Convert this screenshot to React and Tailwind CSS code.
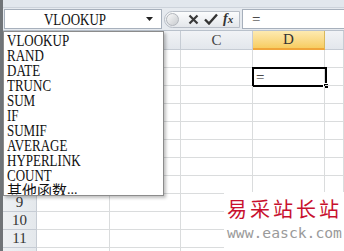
import React from 'react';

const SERIF = { fontFamily: '"Liberation Serif", "Noto Sans CJK SC", serif' };

const items = ['VLOOKUP', 'RAND', 'DATE', 'TRUNC', 'SUM', 'IF', 'SUMIF', 'AVERAGE', 'HYPERLINK', 'COUNT'];
const cols = ['', 'A', 'B', 'C', 'D', 'E'];
const rows = [1, 2, 3, 4, 5, 6, 7, 8, 9, 10, 11, 12];

const HeaderCell = ({ label, active }) => (
  <div
    className={
      active
        ? 'h-[19px] flex items-center justify-center border-r border-b-2 border-r-[#d9b95c] border-b-[#f0a53a] bg-gradient-to-b from-[#fdeab0] to-[#f7cd60] text-[15px] text-[#333]'
        : 'h-[19px] flex items-center justify-center border-r border-b border-[#c6ccd4] bg-gradient-to-b from-[#f1f3f6] to-[#e3e7ec] text-[15px] text-[#444]'
    }
    style={SERIF}
  >
    {label === 'E' ? '' : label}
  </div>
);

const App = () => {
  return (
    <div className="relative w-[344px] h-[251px] overflow-hidden bg-white flex items-start" style={{ fontFamily: '"Liberation Sans", sans-serif' }}>
      <div className="w-[3px] h-[251px] shrink-0 bg-[#707478]" />
      <div className="flex-1 min-w-0">
        <div className="h-[8px] bg-[#e2e7ed] border-b border-[#cdd3db]" />

        {/* formula bar */}
        <div className="h-[23px] flex items-center bg-[#e6eaef] border-b border-[#b9c1cb]">
          <div className="ml-[1px] w-[158px] h-[20px] bg-white border border-[#a7b0bc] flex items-center">
            <span className="flex-1 text-center pl-[4px]">
              <span className="inline-block scale-y-[1.35] text-[13px] leading-[14px] text-[#111]" style={SERIF}>VLOOKUP</span>
            </span>
            <svg width="20" height="20" viewBox="0 0 20 20">
              <path d="M5 8h7l-3.5 4z" fill="#222" />
            </svg>
          </div>
          <div className="ml-[2px] w-[76px] h-[17px] rounded-l-full border border-[#b8bec7] bg-gradient-to-b from-[#fbfcfd] to-[#e4e7eb] flex items-center">
            <div className="w-[13px] h-[13px] ml-[1px] rounded-full border border-[#b2b6bc] bg-gradient-to-br from-[#fafafa] to-[#c8cbcf]" />
            <svg className="ml-[9px]" width="11" height="11" viewBox="0 0 11 11">
              <path d="M1.5 1.5l8 8M9.5 1.5l-8 8" stroke="#3a3a3a" strokeWidth="2.2" />
            </svg>
            <svg className="ml-[5px]" width="14" height="12" viewBox="0 0 14 12">
              <path d="M1 6.5l4 4L13 1.5" stroke="#333" strokeWidth="2.4" fill="none" />
            </svg>
            <span className="ml-[5px] text-[14px] italic font-bold text-[#333] leading-none" style={{ fontFamily: '"Liberation Serif", serif' }}>
              f<span className="text-[11px]">x</span>
            </span>
          </div>
          <div className="ml-[2px] flex-1 h-[20px] bg-white border border-r-0 border-[#a7b0bc] pl-[9px] flex items-center text-[15px] text-[#222]" style={SERIF}>
            =
          </div>
        </div>

        {/* grid */}
        <div className="grid grid-cols-[34px_73px_71px_72px_72px_1fr]">
          {cols.map((c) => (
            <HeaderCell key={'h' + c} label={c} active={c === 'D'} />
          ))}
          {rows.map((r) => (
            <React.Fragment key={r}>
              <div className="h-[18px] flex items-center justify-center border-r border-b border-[#c6ccd4] bg-gradient-to-r from-[#eef1f4] to-[#e4e8ec] text-[15px] text-[#333]" style={SERIF}>
                {r}
              </div>
              {cols.slice(1).map((c) => (
                <div key={c} className="relative h-[18px] border-r border-b border-[#dadcdd]">
                  {r === 2 && c === 'D' && (
                    <div className="absolute -left-[1px] -top-[1px] w-[75px] h-[20px] border-2 border-black pl-[2px] flex items-center text-[15px] text-[#222]" style={SERIF}>
                      =
                      <div className="absolute -right-[4px] -bottom-[4px] w-[6px] h-[6px] bg-black border border-white" />
                    </div>
                  )}
                </div>
              ))}
            </React.Fragment>
          ))}
        </div>
      </div>

      {/* name box dropdown */}
      <div className="absolute left-[3px] top-[31px] w-[161px] h-[165px] bg-white border border-[#8c8c8c] shadow-[2px_2px_3px_rgba(0,0,0,0.25)] overflow-hidden pl-[3px]">
        {items.map((it) => (
          <div key={it} className="h-[15px] leading-[15px]">
            <span className="inline-block scale-y-[1.3] origin-center text-[13px] leading-[15px] text-[#111]" style={SERIF}>
              {it}
            </span>
          </div>
        ))}
        <div className="h-[15px] leading-[15px] flex items-center text-[#111]">
          <span className="text-[15px] leading-[15px]" style={{ fontFamily: '"Noto Sans CJK SC", sans-serif' }}>其他函数</span>
          <span className="text-[14px] leading-[15px]" style={SERIF}>...</span>
        </div>
      </div>

      {/* watermark */}
      <div className="absolute right-0 bottom-0 w-[120px] h-[59px] bg-white pl-[3px]">
        <div className="mt-[4px] text-[20px] leading-[26px] tracking-[3px] text-[#c8102e]" style={{ fontFamily: '"Noto Sans CJK SC", sans-serif' }}>
          易采站长站
        </div>
        <div className="mt-[3px] text-[14.7px] leading-[16px] text-[#9a9a9a]" style={{ fontFamily: '"DejaVu Sans Mono", monospace' }}>
          www.easck.com
        </div>
      </div>
    </div>
  );
};

export default App;
